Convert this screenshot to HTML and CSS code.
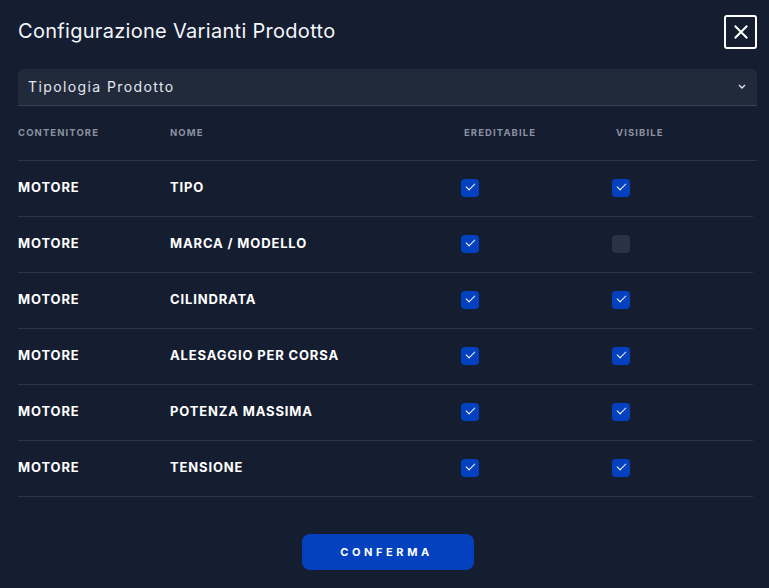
FILE: index.html
```html
<!DOCTYPE html>
<html lang="it">
<head>
<meta charset="utf-8">
<title>Configurazione Varianti Prodotto</title>
<link rel="stylesheet" href="styles.css">
</head>
<body>
<div class="modal">
  <header class="head">
    <h1 class="title">Configurazione Varianti Prodotto</h1>
    <button class="close" aria-label="Chiudi">
      <svg width="14" height="14" viewBox="0 0 14 14"><path d="M1.5 1.5 L12.5 12.5 M12.5 1.5 L1.5 12.5" stroke="#fff" stroke-width="2" stroke-linecap="square"/></svg>
    </button>
  </header>
  <div class="select">
    <span class="select-text">Tipologia Prodotto</span>
    <svg class="chev" width="8" height="5" viewBox="0 0 8 5"><path d="M1 1 L4 4 L7 1" stroke="#e4e7ee" stroke-width="1.4" fill="none"/></svg>
  </div>
  <div class="table">
    <div class="thead">
      <span class="c1">CONTENITORE</span>
      <span class="c2">NOME</span>
      <span class="c3">EREDITABILE</span>
      <span class="c4">VISIBILE</span>
    </div>
    <div class="row"><span class="c1">MOTORE</span><span class="c2">TIPO</span><span class="c3"><i class="cb on"></i></span><span class="c4"><i class="cb on"></i></span></div>
    <div class="row"><span class="c1">MOTORE</span><span class="c2">MARCA / MODELLO</span><span class="c3"><i class="cb on"></i></span><span class="c4"><i class="cb"></i></span></div>
    <div class="row"><span class="c1">MOTORE</span><span class="c2">CILINDRATA</span><span class="c3"><i class="cb on"></i></span><span class="c4"><i class="cb on"></i></span></div>
    <div class="row"><span class="c1">MOTORE</span><span class="c2">ALESAGGIO PER CORSA</span><span class="c3"><i class="cb on"></i></span><span class="c4"><i class="cb on"></i></span></div>
    <div class="row"><span class="c1">MOTORE</span><span class="c2">POTENZA MASSIMA</span><span class="c3"><i class="cb on"></i></span><span class="c4"><i class="cb on"></i></span></div>
    <div class="row"><span class="c1">MOTORE</span><span class="c2">TENSIONE</span><span class="c3"><i class="cb on"></i></span><span class="c4"><i class="cb on"></i></span></div>
  </div>
  <div class="foot">
    <button class="confirm">CONFERMA</button>
  </div>
</div>
</body>
</html>
```
FILE: styles.css
```css
* { box-sizing: border-box; }
html, body { margin: 0; height: 100%; }
body {
  background: #151d31;
  font-family: "Inter", "Liberation Sans", sans-serif;
  color: #fff;
}
.modal {
  width: 769px;
  height: 588px;
  padding: 15px 12px 0 18px;
  display: flex;
  flex-direction: column;
}
.head {
  display: flex;
  justify-content: space-between;
  align-items: center;
  height: 34px;
}
.title {
  margin: -3px 0 0 0;
  font-size: 20px;
  font-weight: 400;
  letter-spacing: 0.3px;
  color: #f4f6fa;
}
.close {
  width: 33px;
  height: 34px;
  border: 2px solid #fff;
  border-radius: 3px;
  background: transparent;
  padding: 0;
  display: flex;
  align-items: center;
  justify-content: center;
}
.select {
  margin-top: 20px;
  height: 37px;
  background: #212a3b;
  border-radius: 6px 6px 0 0;
  border-bottom: 1px solid #3a4356;
  display: flex;
  align-items: center;
  justify-content: space-between;
  padding: 0 10px 2px 10px;
}
.select-text {
  font-size: 14px;
  letter-spacing: 1.4px;
  color: #e3e6ec;
}
.chev { margin-right: 1px; }
.table { display: flex; flex-direction: column; }
.thead, .row {
  display: grid;
  grid-template-columns: 152px 294px 152px 1fr;
  align-items: center;
}
.thead {
  height: 55px;
  border-bottom: 1px solid #2c3446;
  font-size: 9.5px;
  font-weight: 700;
  letter-spacing: 1.1px;
  color: #8b91a0;
  padding-bottom: 2px;
}
.row {
  height: 56px;
  border-bottom: 1px solid #2c3446;
  margin-right: 4px;
  padding-bottom: 2px;
  font-size: 13px;
  font-weight: 700;
  color: #fff;
  letter-spacing: 0.85px;
}
.row .c1, .row .c2 { margin-bottom: 2px; }
.row .c3, .row .c4 { display: flex; }
.row .c3 { margin-left: -3px; }
.row .c4 { margin-left: -4px; }
.cb {
  display: block;
  width: 18px;
  height: 18px;
  border-radius: 4px;
  background: #2a3245;
  position: relative;
}
.cb.on { background: #0341c0; }
.cb.on::after {
  content: "";
  position: absolute;
  left: 5px;
  top: 4px;
  width: 8px;
  height: 4px;
  border-left: 1.8px solid #fff;
  border-bottom: 1.8px solid #fff;
  transform: rotate(-45deg);
}
.foot {
  display: flex;
  justify-content: center;
  margin-top: 37px;
}
.confirm {
  width: 172px;
  height: 36px;
  border: none;
  border-radius: 8px;
  background: #0341bf;
  color: #fff;
  font-family: "Inter", "Liberation Sans", sans-serif;
  font-size: 11px;
  font-weight: 700;
  letter-spacing: 3.6px;
  padding-left: 4px;
}
```
